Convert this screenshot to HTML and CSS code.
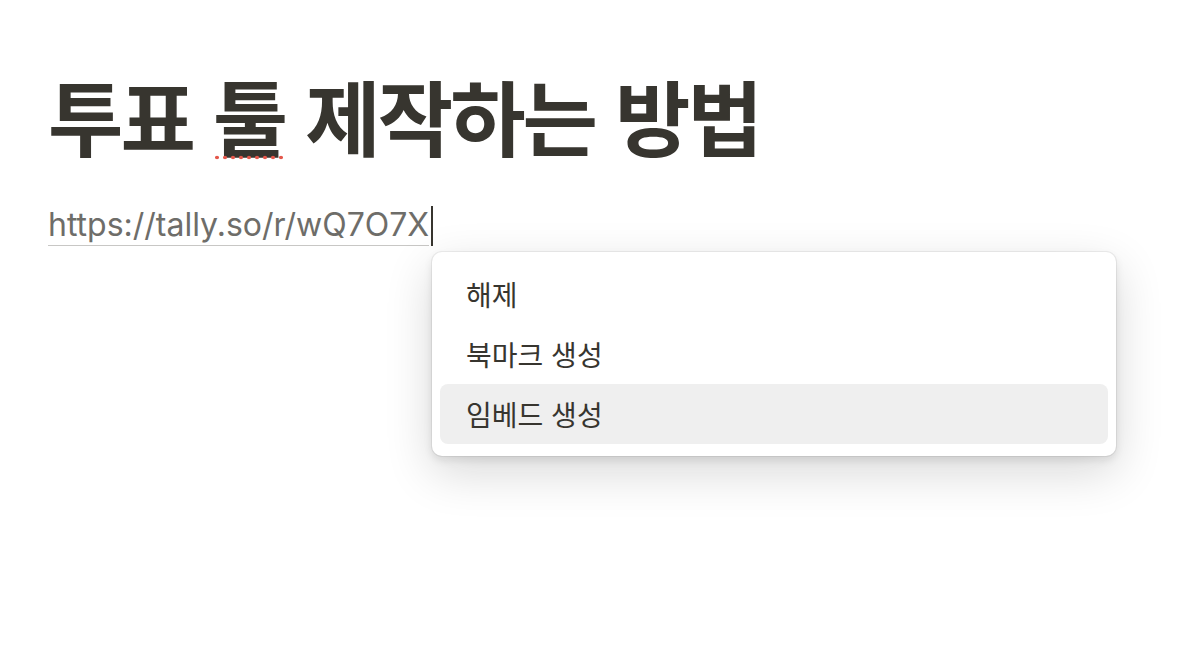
FILE: index.html
```html
<!DOCTYPE html>
<html lang="ko">
<head>
<meta charset="utf-8">
<link rel="stylesheet" href="styles.css">
</head>
<body>
<main class="page">
  <h1 class="title">투표 <span class="misspelled">툴</span> 제작하는 방법</h1>
  <p class="link-line"><span class="link">https://tally.so/r/wQ7O7X</span><span class="caret"></span></p>
  <div class="popover">
    <div class="option">해제</div>
    <div class="option">북마크 생성</div>
    <div class="option option-active">임베드 생성</div>
  </div>
</main>
</body>
</html>
```
FILE: styles.css
```css
html, body {
  margin: 0;
  padding: 0;
  background: #ffffff;
}
body {
  font-family: Inter, "Noto Sans CJK KR", sans-serif;
  color: #37352f;
}
.page {
  padding: 60px 0 0 48px;
  position: relative;
  min-height: 600px;
}
.title {
  margin: 0;
  font-family: "Noto Sans CJK KR", sans-serif;
  font-weight: 700;
  font-size: 82px;
  line-height: 110px;
  letter-spacing: -3px;
  color: #37352f;
}
.misspelled {
  position: relative;
}
.misspelled::after {
  content: "";
  position: absolute;
  left: 0;
  right: 2px;
  bottom: 14px;
  height: 5px;
  background-image: radial-gradient(circle, #e4584c 1.6px, transparent 2.1px);
  background-size: 8px 5px;
  background-repeat: repeat-x;
}
.link-line {
  margin: 35px 0 0 0;
  font-size: 32px;
  line-height: 44px;
  display: flex;
  align-items: center;
}
.link {
  color: #6e6d69;
  border-bottom: 1px solid #c8c7c5;
  line-height: 40px;
}
.caret {
  display: inline-block;
  width: 2px;
  height: 40px;
  background: #37352f;
  margin-left: 2px;
}
.popover {
  position: absolute;
  left: 432px;
  top: 252px;
  width: 668px;
  padding: 12px 8px;
  background: #ffffff;
  border-radius: 10px;
  box-shadow: rgba(15, 15, 15, 0.06) 0 0 0 1px, rgba(15, 15, 15, 0.1) 0 4px 8px, rgba(15, 15, 15, 0.16) 0 16px 48px;
}
.option {
  height: 60px;
  display: flex;
  align-items: center;
  padding-left: 26px;
  border-radius: 8px;
  font-family: "Noto Sans CJK KR", sans-serif;
  font-size: 28px;
  color: #37352f;
}
.option-active {
  background: #efefef;
}
```
